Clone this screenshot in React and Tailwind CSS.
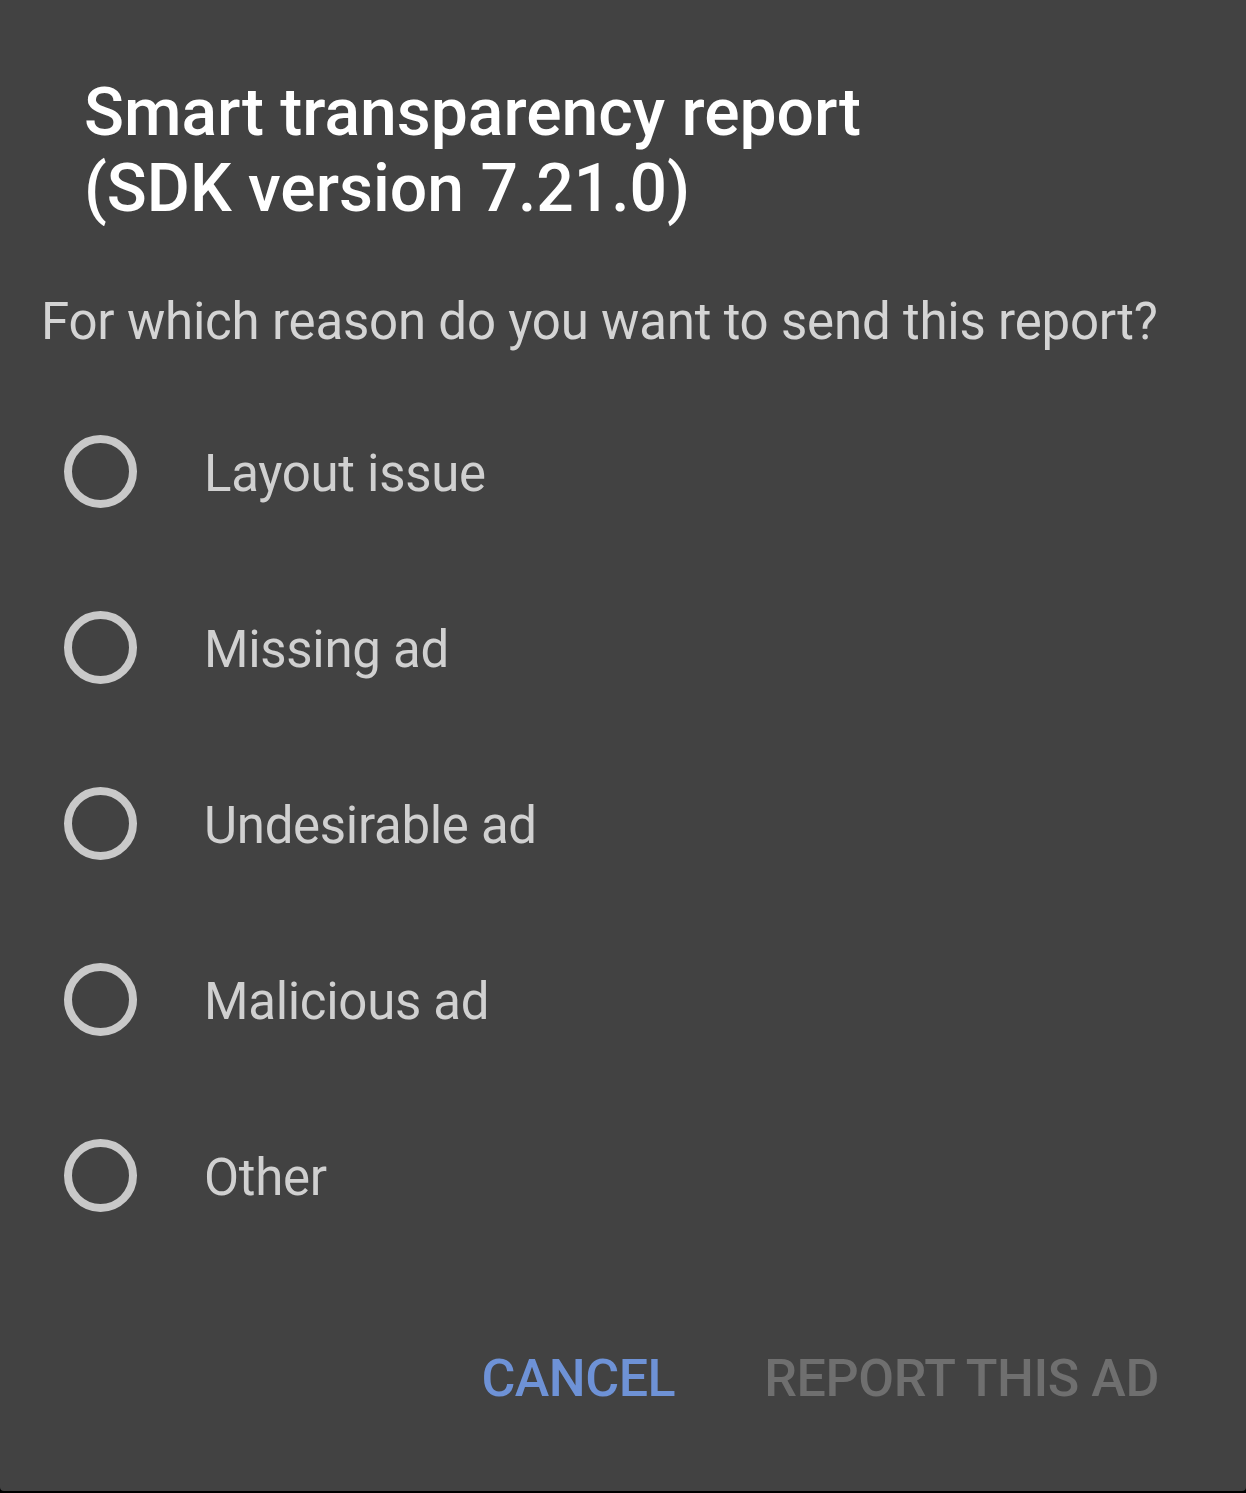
import React, { useState } from "react";

const reasons = [
  "Layout issue",
  "Missing ad",
  "Undesirable ad",
  "Malicious ad",
  "Other",
];

export default function App() {
  const [selected, setSelected] = useState(null);

  return (
    <div className="min-h-[1493px] w-[1246px] bg-black font-['Roboto',sans-serif]">
      <div className="flex h-[1491px] flex-col rounded-b-[4px] bg-[#424242]">
        <h1 className="pl-[84px] pt-[75px] text-[66px] font-medium leading-[76px] text-white">
          Smart transparency report
          <br />
          (SDK version 7.21.0)
        </h1>

        <p className="mt-[65px] pl-[41px] text-[51px] leading-[60px] tracking-[-0.2px] text-[#d4d4d4]">
          For which reason do you want to send this report?
        </p>

        <div className="mt-[31px] flex flex-col">
          {reasons.map((reason) => (
            <button
              key={reason}
              onClick={() => setSelected(reason)}
              className="flex h-[176px] items-center pl-[64px] text-left"
            >
              <span className="flex h-[73px] w-[73px] items-center justify-center rounded-full border-[8px] border-[#c9c9c9]">
                {selected === reason && (
                  <span className="h-[37px] w-[37px] rounded-full bg-[#c9c9c9]" />
                )}
              </span>
              <span className="ml-[67px] pt-[5px] text-[51px] leading-[60px] tracking-[-0.3px] text-[#d0d0d0]">
                {reason}
              </span>
            </button>
          ))}
        </div>

        <div className="mt-[86px] flex justify-end gap-[89px] pr-[87px]">
          <button className="text-[52px] font-medium leading-[60px] tracking-[-0.5px] text-[#6e92d6]">
            CANCEL
          </button>
          <button className="text-[52px] font-medium leading-[60px] tracking-[-0.4px] text-[#6f6f6f]">
            REPORT THIS AD
          </button>
        </div>
      </div>
    </div>
  );
}
